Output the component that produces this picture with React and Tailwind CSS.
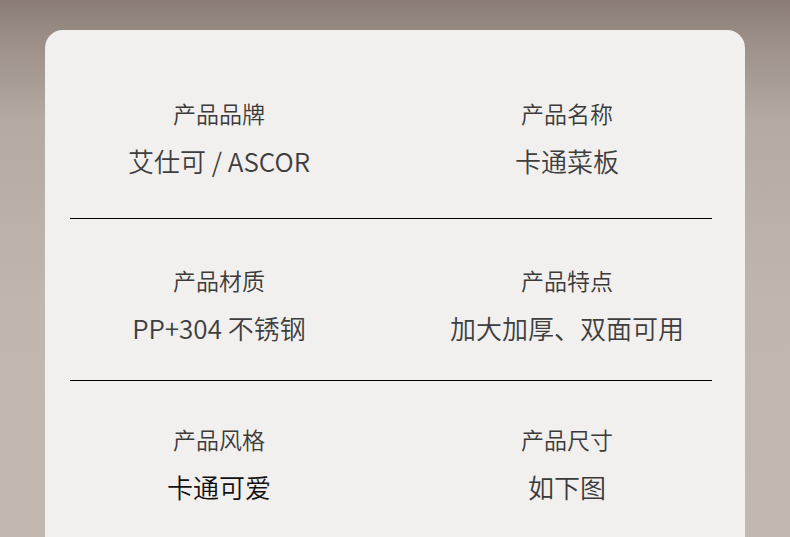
const rows = [
  {
    pad: 'pt-[68px] pb-[40px]',
    cells: [
      ['产品品牌', '艾仕可 / ASCOR', 'text-[#3e3e3e]'],
      ['产品名称', '卡通菜板', 'text-[#3e3e3e]'],
    ],
  },
  {
    pad: 'pt-[46px] pb-[35px]',
    cells: [
      ['产品材质', 'PP+304 不锈钢', 'text-[#3e3e3e]'],
      ['产品特点', '加大加厚、双面可用', 'text-[#3e3e3e]'],
    ],
  },
  {
    pad: 'pt-[43px] pb-[40px]',
    cells: [
      ['产品风格', '卡通可爱', 'text-[#111111]'],
      ['产品尺寸', '如下图', 'text-[#3a3a3a]'],
    ],
  },
]

export default function App() {
  return (
    <div
      className="h-[537px] w-[790px] overflow-hidden bg-[linear-gradient(180deg,#8a7c74_0px,#9b8f87_40px,#b4aaa3_120px,#bfb6b0_300px,#c1b8b2_537px)] pt-[30px]"
      style={{ fontFamily: '"Noto Sans CJK SC", "Noto Sans", sans-serif' }}
    >
      <div className="ml-[45px] h-[520px] w-[700px] rounded-t-[18px] bg-[#f2f0ee]">
        {rows.map((row, i) => (
          <div key={i}>
            <div className={`grid grid-cols-2 pr-[4px] ${row.pad}`}>
              {row.cells.map(([label, value, tone]) => (
                <div key={label} className="flex flex-col items-center">
                  <div className="text-[23px] font-[350] leading-[30px] text-[#3a3a3a]">{label}</div>
                  <div className={`mt-[16px] text-[26px] font-[350] leading-[34px] ${tone}`}>{value}</div>
                </div>
              ))}
            </div>
            {i < rows.length - 1 && <div className="ml-[25px] h-px w-[642px] bg-black" />}
          </div>
        ))}
      </div>
    </div>
  )
}
